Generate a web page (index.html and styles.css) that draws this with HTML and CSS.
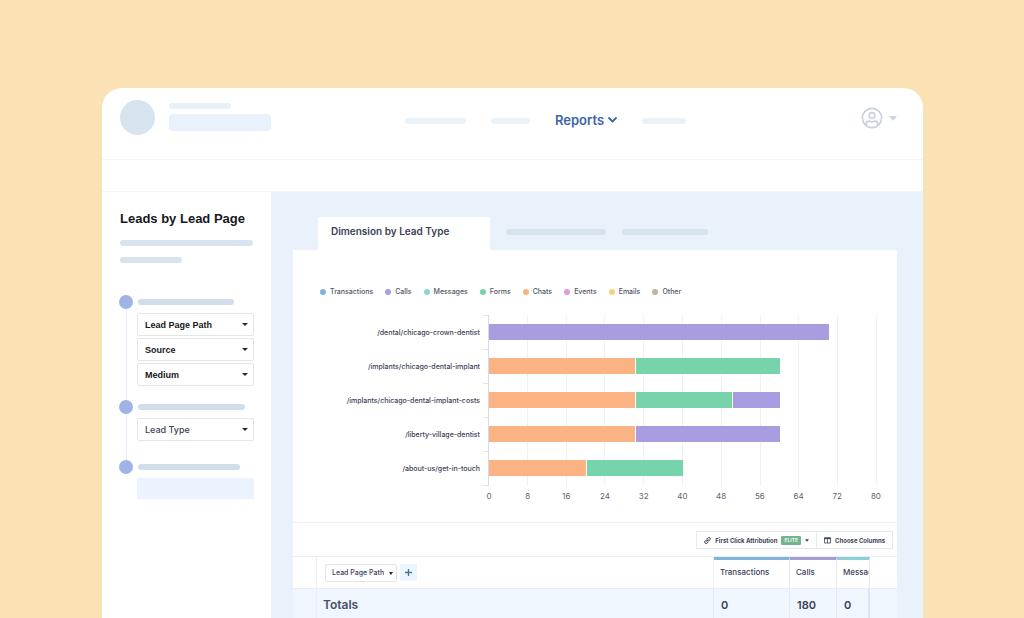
FILE: index.html
```html
<!DOCTYPE html>
<html lang="en">
<head>
<meta charset="utf-8">
<meta name="viewport" content="width=device-width, initial-scale=1">
<title>Leads by Lead Page</title>
<link rel="stylesheet" href="styles.css">
</head>
<body>
<div class="app">
  <header class="topbar">
    <div class="brand">
      <span class="brand-logo"></span>
      <div class="brand-lines"><span class="brand-small"></span><span class="brand-large"></span></div>
    </div>
    <nav class="nav">
      <span class="pill w61"></span>
      <span class="pill w39"></span>
      <a class="nav-link" href="#reports">Reports
        <svg width="9" height="6" viewBox="0 0 9 6"><path d="M1 1l3.500 3.500L8 1" fill="none" stroke="currentColor" stroke-width="1.800" stroke-linecap="round" stroke-linejoin="round"/></svg>
      </a>
      <span class="pill w44"></span>
    </nav>
    <button class="user" type="button" aria-label="Account">
      <svg width="22" height="22" viewBox="0 0 22 22" fill="none" stroke="currentColor" stroke-width="1.700"><circle cx="11" cy="11" r="9.600"/><circle cx="11" cy="8.500" r="2.900"/><path d="M5.300 18v-1.200c0-1.800 1.200-2.600 3-2.600 1 .4 4.400.4 5.400 0 1.800 0 3 .8 3 2.600V18"/></svg>
      <svg width="8" height="5" viewBox="0 0 8 5"><path d="M.5.300h7L4 4.500z" fill="currentColor" stroke="currentColor" stroke-width=".5" stroke-linejoin="round"/></svg>
    </button>
  </header>
  <div class="subbar"></div>
  <div class="body">
    <aside class="sidebar">
      <h1 class="side-title">Leads by Lead Page</h1>
      <span class="bar w133"></span>
      <span class="bar w62 second"></span>
      <div class="steps">
        <section class="step">
          <div class="step-head"><span class="step-dot"></span><span class="bar w96"></span></div>
          <div class="step-body">
            <label class="pick"><select class="bold" aria-label="First dimension"><option>Lead Page Path</option></select></label>
            <label class="pick"><select class="bold" aria-label="Second dimension"><option>Source</option></select></label>
            <label class="pick"><select class="bold" aria-label="Third dimension"><option>Medium</option></select></label>
          </div>
        </section>
        <section class="step roomy">
          <div class="step-head"><span class="step-dot"></span><span class="bar w107"></span></div>
          <div class="step-body">
            <label class="pick"><select aria-label="Metric"><option>Lead Type</option></select></label>
          </div>
        </section>
        <section class="step last">
          <div class="step-head"><span class="step-dot"></span><span class="bar w102"></span></div>
          <div class="step-body"><span class="block"></span></div>
        </section>
      </div>
    </aside>
    <main class="content">
      <div class="tabs">
        <button class="tab" type="button">Dimension by Lead Type</button>
        <span class="bar w100"></span>
        <span class="bar w86"></span>
      </div>
      <div class="panel">
        <div class="chart-area">
          <ul class="legend">
            <li class="blue">Transactions</li>
            <li class="purple">Calls</li>
            <li class="teal">Messages</li>
            <li class="green">Forms</li>
            <li class="orange">Chats</li>
            <li class="pink">Events</li>
            <li class="yellow">Emails</li>
            <li class="tan">Other</li>
          </ul>
          <div class="chart">
            <div class="names">
              <span>/dental/chicago-crown-dentist</span>
              <span>/implants/chicago-dental-implant</span>
              <span>/implants/chicago-dental-implant-costs</span>
              <span>/liberty-village-dentist</span>
              <span>/about-us/get-in-touch</span>
            </div>
            <div class="ticks"><i></i><i></i><i></i><i></i><i></i></div>
            <div class="plot">
              <div class="gridlines"><i></i><i></i><i></i><i></i><i></i><i></i><i></i><i></i><i></i><i></i></div>
              <div class="rows">
                <div class="row"><b class="purple" style="width:87.5%"></b></div>
                <div class="row"><b class="orange" style="width:37.5%"></b><b class="green" style="width:37.5%"></b></div>
                <div class="row"><b class="orange" style="width:37.5%"></b><b class="green" style="width:25%"></b><b class="purple" style="width:12.5%"></b></div>
                <div class="row"><b class="orange" style="width:37.5%"></b><b class="purple" style="width:37.5%"></b></div>
                <div class="row"><b class="orange" style="width:25%"></b><b class="green" style="width:25%"></b></div>
              </div>
            </div>
            <div class="axis"><span>0</span><span>8</span><span>16</span><span>24</span><span>32</span><span>40</span><span>48</span><span>56</span><span>64</span><span>72</span><span>80</span></div>
          </div>
        </div>
        <div class="toolbar">
          <button class="tool" type="button">
            <svg width="7" height="7" viewBox="0 0 7 7" fill="none" stroke="currentColor" stroke-width="1" stroke-linecap="round"><path d="M2.800 4.200L4.300 2.700M3 1.800l.9-.9a1.300 1.300 0 0 1 2 2L5 3.800a1.300 1.300 0 0 1-1.600.1M4 5.200l-.9.900a1.300 1.300 0 0 1-2-2L2 3.200a1.300 1.300 0 0 1 1.600-.1"/></svg>
            First Click Attribution <span class="badge">ELITE</span>
            <svg width="4" height="3" viewBox="0 0 4 3"><path d="M0 .3h4L2 2.700z" fill="currentColor"/></svg>
          </button>
          <button class="tool" type="button">
            <svg width="7" height="7" viewBox="0 0 7 7" fill="none" stroke="currentColor"><path d="M.5 1h6v5h-6zM3.500 2v4" stroke-width=".8"/><path d="M.2 1.300h6.600" stroke-width="1.600"/></svg>
            Choose Columns
          </button>
        </div>
        <table class="data">
          <colgroup><col class="c-edge"><col><col class="c-trans"><col class="c-calls"><col class="c-msg"><col class="c-rest"></colgroup>
          <thead>
            <tr>
              <td></td>
              <th class="dim">
                <div class="dim-tools">
                  <label class="mini"><select aria-label="Row dimension"><option>Lead Page Path</option></select></label>
                  <button class="add" type="button" aria-label="Add dimension"><svg width="7" height="7" viewBox="0 0 7 7"><path d="M3.500.500v6M.500 3.500h6" stroke="currentColor" stroke-width="1.300" stroke-linecap="round"/></svg></button>
                </div>
              </th>
              <th class="metric m-blue">Transactions</th>
              <th class="metric m-purple">Calls</th>
              <th class="metric m-teal">Messages</th>
              <td></td>
            </tr>
          </thead>
          <tbody>
            <tr><td></td><th class="total">Totals</th><td class="value">0</td><td class="value">180</td><td class="value edge">0</td><td></td></tr>
          </tbody>
        </table>
      </div>
    </main>
  </div>
</div>
</body>
</html>
```
FILE: styles.css
```css
* { box-sizing: border-box; }
html, body { height: 100%; }
body {
  margin: 0;
  padding: 88px 101px 0 102px;
  background: #fae2b5;
  color: #3b4158;
  font-family: Inter, "Liberation Sans", sans-serif;
  overflow: hidden;
}
button, select { font: inherit; color: inherit; margin: 0; }
ul { list-style: none; margin: 0; padding: 0; }
svg { display: block; flex: none; }

.app {
  min-height: 100%;
  display: flex;
  flex-direction: column;
  background: #fff;
  border-radius: 20px 20px 0 0;
  overflow: hidden;
}

/* Header */
.topbar {
  display: grid;
  grid-template-columns: 285px 1fr auto;
  align-items: start;
  height: 72px;
  padding: 12px 26px 0 18px;
  border-bottom: 1px solid #f5f6f8;
}
.brand { display: flex; gap: 14px; }
.brand-logo { width: 35px; height: 35px; border-radius: 50%; background: #d7e4f0; }
.brand-lines { display: flex; flex-direction: column; gap: 5px; padding-top: 3px; }
.brand-small { width: 62px; height: 6px; border-radius: 2px; background: #e9f0fa; }
.brand-large { width: 102px; height: 17px; border-radius: 4px; background: #e8f1fc; }
.nav { display: flex; align-items: center; gap: 25px; height: 41px; }
.pill { height: 6px; border-radius: 3px; background: #e9f2f9; }
.nav-link {
  display: flex;
  align-items: center;
  gap: 4px;
  padding-bottom: 2px;
  color: #3c64a8;
  font-size: 13px;
  font-weight: 600;
  text-decoration: none;
}
.user {
  display: flex;
  align-items: center;
  gap: 6px;
  padding: 7px 0 0;
  border: 0;
  background: none;
  color: #c8d3df;
}
.subbar { height: 32px; border-bottom: 1px solid #f5f6f8; }

/* Sidebar */
.body { display: flex; flex: 1; }
.sidebar { width: 169px; padding: 19px 17px 0 18px; flex: none; }
.side-title {
  margin: 0 0 13px;
  color: #16171c;
  font: bold 13px/16px "Liberation Sans", sans-serif;
  white-space: nowrap;
}
.bar { display: block; height: 6px; border-radius: 3px; background: #d7e3ed; }
.bar.second { margin-top: 11px; }
.steps { margin-top: 32px; }
.step { position: relative; padding-bottom: 14px; }
.step.roomy { padding-bottom: 19px; }
.step::before {
  content: "";
  position: absolute;
  left: 6px;
  top: 14px;
  bottom: 0;
  width: 1px;
  background: #e8ebf8;
}
.step.last::before { display: none; }
.step-head { display: flex; align-items: center; gap: 5px; }
.step-head .bar { background: #d2ddea; }
.step-dot { width: 14px; height: 14px; margin-left: -1px; border-radius: 50%; background: #9fb4e4; }
.step-body { display: flex; flex-direction: column; gap: 2px; margin-top: 4px; padding-left: 17px; }
.block { height: 21px; background: #ebf3fe; }
.pick, .mini { position: relative; display: block; }
.pick select, .mini select {
  appearance: none;
  display: block;
  width: 100%;
  height: 23px;
  padding: 0 18px 0 7px;
  border: 1px solid #e3e5ea;
  border-radius: 2px;
  background: #fff;
  font-size: 9px;
  font-weight: 500;
}
.pick select.bold { color: #17181d; font-family: "Liberation Sans", sans-serif; font-weight: 700; }
.pick::after, .mini::after {
  content: "";
  position: absolute;
  right: 6px;
  top: 10px;
  border: 3px solid transparent;
  border-top-color: #25272e;
  border-bottom: 0;
}

/* Report */
.content { flex: 1; min-width: 0; display: flex; flex-direction: column; padding: 25px 26px 0 22px; background: #e9f1fb; }
.tabs { display: flex; align-items: center; gap: 16px; padding-left: 25px; }
.tabs .bar { margin-bottom: 3px; }
.tab {
  width: 172px;
  height: 33px;
  padding: 0 0 5px 13px;
  border: 0;
  background: #fff;
  font-size: 10px;
  font-weight: 600;
  text-align: left;
}
.panel { flex: 1; background: #fff; }
.chart-area { padding: 36px 20px 20px 27px; }
.legend { display: flex; gap: 12px; font-size: 7px; line-height: 12px; font-weight: 500; color: #50566a; }
.legend li { display: flex; align-items: center; gap: 4px; }
.legend li::before { content: ""; width: 6px; height: 6px; border-radius: 50%; background: var(--tone); }
.blue { --tone: #7fb2de; }
.purple { --tone: #a99ce1; }
.teal { --tone: #86d6d9; }
.green { --tone: #77d3a9; }
.orange { --tone: #fbb384; }
.pink { --tone: #dc9fdc; }
.yellow { --tone: #f6d083; }
.tan { --tone: #bcb6a0; }

.chart { display: grid; grid-template-columns: 163px 5px 1fr; margin-top: 17px; }
.names { display: grid; grid-template-rows: repeat(5, 34px); align-items: center; padding-right: 3px; text-align: right; font-size: 7px; font-weight: 500; white-space: nowrap; }
.ticks { display: grid; grid-template-rows: repeat(5, 34px); border-bottom: 1px solid #dfe3ea; }
.ticks i { border-top: 1px solid #dfe3ea; }
.plot { display: grid; border-left: 1px solid #d5dbe4; }
.gridlines, .rows { grid-area: 1 / 1; }
.gridlines { display: grid; grid-template-columns: repeat(10, 1fr); }
.gridlines i { border-right: 1px solid #f0f1f4; }
.rows { display: grid; grid-template-rows: repeat(5, 34px); align-items: center; }
.row { display: flex; height: 16px; }
.row b { background: var(--tone); }
.row b + b { border-left: 1px solid #fff; }
.axis {
  grid-column: 3;
  display: flex;
  justify-content: space-between;
  margin: 4px -9px 0 -9px;
  font-size: 8px;
  line-height: 12px;
  color: #5e6371;
}
.axis span { width: 20px; text-align: center; }

.toolbar { display: flex; justify-content: flex-end; height: 34px; padding: 8px 4px 0; border-top: 1px solid #eff1f4; }
.tool {
  display: flex;
  align-items: center;
  gap: 4px;
  height: 18px;
  padding: 0 7px;
  border: 1px solid #e6e8ed;
  background: #fff;
  font-size: 6px;
  font-weight: 700;
  white-space: nowrap;
}
.tool + .tool { border-left: 0; }
.badge { padding: 0 3px; border-radius: 1px; background: #74b58c; color: #e9f7ee; font-size: 5px; line-height: 9px; }

.data { width: 100%; table-layout: fixed; border-collapse: separate; border-spacing: 0; border-top: 1px solid #eceef3; text-align: left; }
.data td, .data th { padding: 0; }
.c-edge { width: 24px; }
.c-trans { width: 76px; }
.c-calls { width: 47px; }
.c-msg { width: 33px; }
.c-rest { width: 27px; }
.data thead td, .data thead th { height: 32px; border-bottom: 1px solid #e9eef5; }
.data td:first-child, .dim { border-right: 1px solid #eceff5; }
.dim-tools { display: flex; align-items: center; gap: 3px; padding-left: 8px; }
.mini { width: 72px; }
.mini select { height: 18px; padding: 0 12px 0 6px; font-size: 7px; font-weight: 500; }
.mini::after { right: 4px; top: 8px; border-width: 2px; border-bottom: 0; border-top-width: 3px; }
.add { display: grid; place-items: center; width: 17px; height: 17px; padding: 0; border: 0; background: #ecf5fd; color: #44709c; }
.data .metric { padding: 0 0 4px 6px; border-top: 3px solid var(--edge); border-right: 1px solid #e6ebf2; overflow: hidden; font-size: 8px; font-weight: 500; white-space: nowrap; }
.m-blue { --edge: #7fb5dc; }
.m-purple { --edge: #a79fd3; }
.m-teal { --edge: #8bd0d8; }
.data tbody tr { height: 31px; background: #eff6fe; }
.data .total { padding-left: 6px; border-right: 1px solid #e3eaf4; font-size: 12px; font-weight: 600; color: #4a5069; }
.data .value { padding-left: 7px; border-right: 1px solid #e3eaf4; font-size: 11px; font-weight: 600; }
.data .edge { border-right: 2px solid #dde5ef; }
.panel { margin-bottom: -1px; }
.chart-area { padding-bottom: 20px; }
.w39 { width: 39px; }
.w44 { width: 44px; }
.w61 { width: 61px; }
.w62 { width: 62px; }
.w86 { width: 86px; }
.w96 { width: 96px; }
.w100 { width: 100px; }
.w102 { width: 102px; }
.w107 { width: 107px; }
.w133 { width: 133px; }
```
